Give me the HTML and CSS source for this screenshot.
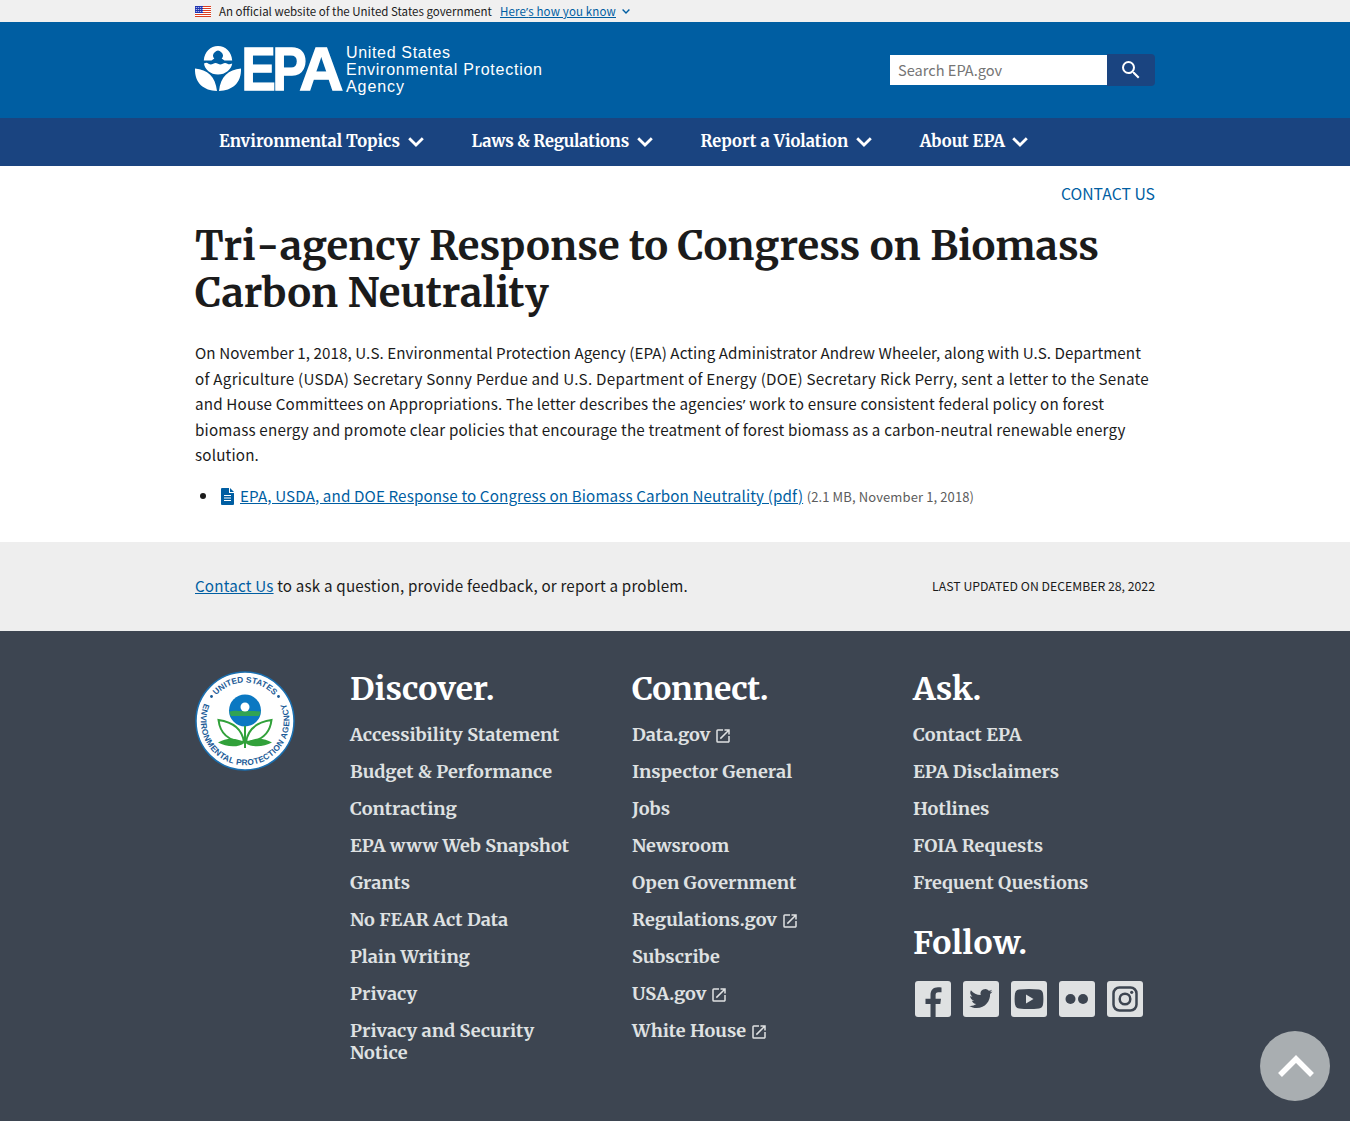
FILE: index.html
```html
<!DOCTYPE html>
<html lang="en">
<head>
<meta charset="utf-8">
<title>Tri-agency Response to Congress on Biomass Carbon Neutrality | US EPA</title>
<link rel="stylesheet" href="styles.css">
</head>
<body>
<svg class="sprite" aria-hidden="true">
  <symbol id="chev" viewBox="0 0 16 10"><path d="M1.2 1.2 8 8 14.8 1.2" fill="none" stroke="currentColor" stroke-width="2.8"/></symbol>
  <symbol id="ext" viewBox="0 0 24 24"><path fill="currentColor" d="M19 19H5V5h7V3H5a2 2 0 0 0-2 2v14a2 2 0 0 0 2 2h14c1.100 0 2-.9 2-2v-7h-2v7zM14 3v2h3.590l-9.830 9.830 1.410 1.410L19 6.410V10h2V3h-7z"/></symbol>
</svg>

<div class="banner">
  <div class="wrap banner-row">
    <svg class="flag" viewBox="0 0 16 11"><path fill="#fff" d="M0 0h16v11H0z"/><path stroke="#db3e1f" d="M0 .5h16M0 2.500h16M0 4.500h16M0 6.500h16M0 8.500h16M0 10.500h16"/><path fill="#1e33b1" d="M0 0h8v7H0z"/><path stroke="#fff" stroke-width=".8" stroke-dasharray="1 1" d="M.8 1.500h7M.8 3.500h7M.8 5.500h7"/></svg>
    <span class="official">An official website of the United States government</span>
    <a class="know" href="#">Here<span class="apos">’</span>s how you know</a>
    <svg class="know-chev"><use href="#chev"/></svg>
  </div>
</div>

<header class="header">
  <div class="wrap header-row">
    <svg class="logo" viewBox="0 0 350 52">
      <g fill="#fff">
        <path d="M8.800 16.500C9.500 7.500 15.500 2 23 2s13.500 5.500 14.200 14.500h-7.700c-.9-1-2-1.300-2.800-1.800A4.800 4.800 0 1 0 19.300 14.700c-.8.5-1.900.8-2.800 1.800z"/>
        <path d="M9 19.500c2-1 3-1 4.500.2 1.600 1 3 1 4.700 0 1.600-1 3-1 4.800 0 1.600 1 3 1 4.700 0 1.600-1 3-1 4.700 0 1.500.8 3 .6 4.800-.2C36.300 25.500 30.500 30.500 23 30.500S9.700 25.500 9 19.500z"/>
        <path d="M0 24.500c12.500 1.300 20.500 8 22 22.500C9 46.500-.5 39.500 0 24.500zM46 24.500c-12.500 1.300-20.500 8-22 22.500 13-.5 22.500-7.500 22-22.500z"/>
        <text class="logo-epa" transform="translate(46.500 45.500) scale(.84 1)" x="0 37">EP</text>
        <text class="logo-epa" x="104.200" y="45.500">A</text>
        <text class="logo-name" x="151" y="14" textLength="104">United States</text>
        <text class="logo-name" x="151" y="31" textLength="196">Environmental Protection</text>
        <text class="logo-name" x="151" y="48" textLength="58">Agency</text>
      </g>
    </svg>
    <form class="search">
      <input type="text" placeholder="Search EPA.gov" aria-label="Search">
      <button type="button" aria-label="Search"><svg viewBox="0 0 24 24"><path fill="#fff" d="M15.500 14h-.79l-.28-.27A6.470 6.470 0 0 0 16 9.500 6.500 6.500 0 1 0 9.500 16c1.610 0 3.090-.59 4.230-1.570l.27.28v.79l5 4.990L20.490 19l-4.990-5zm-6 0C7.010 14 5 11.990 5 9.500S7.010 5 9.500 5 14 7.010 14 9.500 11.990 14 9.500 14z"/></svg></button>
    </form>
  </div>
</header>

<nav class="nav">
  <div class="wrap nav-row">
    <a href="#">Environmental Topics<svg><use href="#chev"/></svg></a>
    <a class="laws" href="#">Laws &amp; Regulations<svg><use href="#chev"/></svg></a>
    <a class="report" href="#">Report a Violation<svg><use href="#chev"/></svg></a>
    <a href="#">About EPA<svg><use href="#chev"/></svg></a>
  </div>
</nav>

<main class="main">
  <div class="wrap">
    <div class="contact-top"><a href="#">CONTACT US</a></div>
    <h1>Tri<span class="hyphen">-</span>agency Response to Congress on Biomass Carbon Neutrality</h1>
    <p class="intro"><span class="lead">On November 1, 2018, U.S. Environmental Protection Agency (EPA) Acting Administrator Andrew Wheeler, along with U.S. Department </span><span class="officials">of Agriculture (USDA) Secretary Sonny Perdue and U.S. Department of Energy (DOE) Secretary Rick Perry, sent a letter to the Senate </span>and House Committees on Appropriations. The letter describes the agencies<span class="apos">’</span> work to ensure consistent federal policy on forest biomass energy and promote clear policies that encourage the treatment of forest biomass as a carbon-neutral renewable energy solution.</p>
    <ul class="files">
      <li><svg class="doc" viewBox="0 0 13 17"><path fill="#005ea2" d="M1 0h7v5h5v11a1 1 0 0 1-1 1H1a1 1 0 0 1-1-1V1a1 1 0 0 1 1-1zM9 0l4 4H9z"/><path stroke="#fff" d="M3 7.500h7M3 10h7M3 12.500h7"/></svg><a href="#">EPA, USDA, and DOE Response to Congress on Biomass Carbon Neutrality (pdf)</a> <span class="size">(2.1 MB, November 1, 2018)</span></li>
    </ul>
  </div>
</main>

<section class="feedback">
  <div class="wrap feedback-row">
    <p><a href="#">Contact Us</a> to ask a question, provide feedback, or report a problem.</p>
    <p class="updated">LAST UPDATED ON DECEMBER 28, 2022</p>
  </div>
</section>

<footer class="footer">
  <div class="wrap footer-row">
    <svg class="seal" viewBox="0 0 100 100">
      <defs><path id="arc-top" d="M11.500 50a38.500 38.500 0 0 1 77 0"/><path id="arc-bottom" d="M8.500 34.500A44.300 44.300 0 1 0 91.500 34.500"/></defs>
      <circle cx="50" cy="50" r="49" fill="#fff" stroke="#1a6fb0" stroke-width="1.500"/>
      <text class="seal-text"><textPath href="#arc-top" startOffset="50%" text-anchor="middle" textLength="65">UNITED STATES</textPath></text>
      <text class="seal-text"><textPath href="#arc-bottom" startOffset="50%" text-anchor="middle" textLength="175">ENVIRONMENTAL PROTECTION AGENCY</textPath></text>
      <circle cx="16.500" cy="25.500" r="1.400" fill="#1a5a96"/><circle cx="83.500" cy="25.500" r="1.400" fill="#1a5a96"/>
      <circle cx="50" cy="39.500" r="16" fill="#0b78c2"/>
      <path fill="#31a354" d="M34.500 40.500c5-1.500 8-.5 13-.5s11-.5 18 .5c-.3 1.800-.8 3-1.500 4.500H36c-.8-1.500-1.200-2.700-1.500-4.500z"/>
      <circle cx="50" cy="36" r="4.500" fill="#fff"/>
      <path fill="none" stroke="#31a13a" stroke-width="2" d="M50 55v22M49 71C32 70 25 62 23.500 49 38 51 47 58 49 71zM51 71c17-1 24-9 25.500-22C62 51 53 58 51 71z"/>
      <path fill="#31a13a" d="M49.500 72C41 66 31 67 23 71.500c8 4.500 20 5.500 26.500.5zM50.500 72c8.500-6 18.500-5 26.500-.5-8 4.500-20 5.500-26.500.5z"/>
    </svg>
    <div class="col discover">
      <h2>Discover.</h2>
      <ul>
        <li>Accessibility Statement</li><li>Budget &amp; Performance</li><li>Contracting</li><li>EPA www Web Snapshot</li><li>Grants</li><li>No FEAR Act Data</li><li>Plain Writing</li><li>Privacy</li><li>Privacy and Security Notice</li>
      </ul>
    </div>
    <div class="col connect">
      <h2>Connect.</h2>
      <ul>
        <li>Data.gov<svg class="ext"><use href="#ext"/></svg></li><li>Inspector General</li><li>Jobs</li><li>Newsroom</li><li>Open Government</li><li>Regulations.gov<svg class="ext"><use href="#ext"/></svg></li><li>Subscribe</li><li>USA.gov<svg class="ext"><use href="#ext"/></svg></li><li>White House<svg class="ext"><use href="#ext"/></svg></li>
      </ul>
    </div>
    <div class="col">
      <h2>Ask.</h2>
      <ul>
        <li>Contact EPA</li><li>EPA Disclaimers</li><li>Hotlines</li><li>FOIA Requests</li><li>Frequent Questions</li>
      </ul>
      <h2 class="follow">Follow.</h2>
      <div class="social">
        <svg viewBox="0 0 36 36"><rect width="36" height="36" rx="3"/><path class="ink" d="M15.500 36V23H10.500v-5.200h5V14c0-5 3-7.700 7.500-7.700 1.500 0 3 .1 3.500.2v4.800h-3c-2.400 0-2.900 1.200-2.900 2.900v3.600H26L25.300 23h-4.700v13z"/></svg>
        <svg viewBox="0 0 36 36"><rect width="36" height="36" rx="3"/><path class="ink" d="M29.500 10.600c-.9.400-1.800.6-2.700.7 1-.6 1.700-1.500 2.100-2.600-.9.500-1.900.9-3 1.100a4.730 4.730 0 0 0-8.200 4.300c-4-.2-7.400-2.100-9.800-4.900-1.300 2.200-.6 4.900 1.500 6.300-.8 0-1.500-.2-2.200-.6 0 2.300 1.600 4.300 3.800 4.700-.7.200-1.400.2-2.100.1.600 1.900 2.300 3.200 4.400 3.300A9.500 9.500 0 0 1 6.300 25c2.100 1.300 4.600 2.100 7.300 2.100 8.800 0 13.800-7.400 13.500-14.100 1-.6 1.800-1.400 2.400-2.400z"/></svg>
        <svg viewBox="0 0 36 36"><rect width="36" height="36" rx="3"/><path class="ink" d="M8 8.500Q18 7.300 28 8.500 31.500 9 32 12.500q.8 5.500 0 11-.5 3.500-4 4-10 1.200-20 0-3.500-.5-4-4-.8-5.500 0-11Q4.500 9 8 8.500z"/><path d="M15 13.500v9l7.500-4.500z"/></svg>
        <svg viewBox="0 0 36 36"><rect width="36" height="36" rx="3"/><circle class="ink" cx="11.500" cy="18" r="5"/><circle class="ink" cx="24" cy="18" r="5"/></svg>
        <svg viewBox="0 0 36 36"><rect width="36" height="36" rx="3"/><rect class="line" x="6.500" y="6.500" width="23" height="23" rx="6"/><circle class="line" cx="18" cy="18" r="5.300"/><circle class="ink" cx="24.700" cy="11.300" r="1.600"/></svg>
      </div>
    </div>
  </div>
</footer>
<a class="to-top" href="#" aria-label="Back to top"><svg viewBox="0 0 36 22"><path d="M2 20 18 4l16 16" fill="none" stroke="#fff" stroke-width="5.500"/></svg></a>
</body>
</html>
```
FILE: styles.css
```css
* { box-sizing: border-box; }
body {
  margin: 0;
  font: 15.200px/25.440px "Source Sans Pro", "Noto Sans CJK SC", sans-serif;
  color: #1b1b1b;
  background: #fff;
}
h1, h2, p, ul { margin: 0; padding: 0; }
a { color: #005ea2; }
.sprite { display: none; }
.wrap { width: 960px; margin: 0 auto; }
.apos { font-family: "Noto Sans", sans-serif; line-height: 1; }

.banner { height: 22px; background: #f0f0f0; }
.banner-row { display: flex; align-items: center; height: 22px; font-size: 11.500px; line-height: 22px; white-space: nowrap; }
.flag { width: 16px; height: 11px; margin-right: 8px; }
.official { width: 281px; }
.know { letter-spacing: .15px; }
.know-chev { width: 8px; height: 5px; margin-left: 6px; color: #005ea2; }

.header { height: 96px; background: #005ea2; }
.header-row { display: flex; justify-content: space-between; padding-top: 22px; }
.logo { width: 350px; height: 52px; overflow: visible; }
.logo-epa { font: bold 61px "Liberation Sans", sans-serif; stroke: #fff; stroke-width: 1.500px; }
.logo-name { font: 16px "Liberation Sans", sans-serif; }
.search { display: flex; height: 32px; margin-top: 10px; }
.search input { width: 217px; height: 30px; margin: 1px 0; padding: 0 8px 1px; border: 0; font: inherit; font-size: 14.600px; color: #1b1b1b; background: #fff; }
.search input::placeholder { color: #757575; }
.search button { width: 48px; height: 32px; padding: 4px 12px; border: 0; border-radius: 0 4px 4px 0; background: #1a4480; }
.search button svg { display: block; width: 24px; height: 24px; }

.nav { height: 48px; background: #1a4480; }
.nav-row { display: flex; gap: 48px; padding-left: 24px; }
.nav a { display: flex; align-items: center; height: 48px; font: bold 16.500px/48px Merriweather, "DejaVu Serif Condensed", serif; color: #fff; text-decoration: none; }
.nav .laws { letter-spacing: -.2px; }
.nav .report { letter-spacing: .05px; }
.nav svg { width: 16px; height: 10px; margin-left: 7.500px; }

.main { height: 376px; padding-top: 15px; }
.contact-top { text-align: right; }
.contact-top a { font-size: 15.750px; text-decoration: none; }
h1 { margin-top: 17px; font: bold 40px/47px Merriweather, "DejaVu Serif Condensed", serif; }
.hyphen { padding: 0 .5px; }
.intro { margin-top: 23px; letter-spacing: .17px; }
.lead { letter-spacing: .07px; }
.officials { letter-spacing: .26px; }
.files { margin-top: 15px; padding-left: 24px; letter-spacing: .12px; }
.doc { width: 13px; height: 17px; margin: 0 6px 0 2px; vertical-align: -3px; }
.size { font-size: 13px; color: #5c5c5c; }

.feedback { height: 89px; background: #eee; }
.feedback-row { display: flex; justify-content: space-between; align-items: center; height: 87px; letter-spacing: .18px; }
.updated { padding-top: 2px; font-size: 12.270px; letter-spacing: 0; }

.footer { height: 490px; background: #3d4551; color: #dfe1e2; }
.footer-row { display: flex; padding-top: 40px; }
.seal { flex: none; width: 100px; height: 100px; margin-right: 55px; }
.seal-text { font: bold 8.300px "Liberation Sans", sans-serif; fill: #1a5a96; }
.col { flex: none; width: 282px; font: bold 18.080px/22px Merriweather, "DejaVu Serif Condensed", serif; letter-spacing: .04px; }
.col.connect { width: 281px; }
.col:last-child { width: 242px; }
.col h2 { font-size: 32px; line-height: 36px; color: #fff; }
.connect h2 { letter-spacing: -.35px; }
.col ul { display: grid; gap: 15px; margin-top: 17px; list-style: none; }
.discover ul { width: 230px; }
.ext { width: 18px; height: 18px; margin-left: 4px; vertical-align: -4px; }
.col .follow { margin-top: 31px; letter-spacing: .5px; }
.social { display: flex; gap: 12px; margin: 20px 0 0 2px; fill: #dfe1e2; }
.social svg { width: 36px; height: 36px; }
.social .ink { fill: #3d4551; }
.social .line { fill: none; stroke: #3d4551; stroke-width: 2.500; }

.to-top { position: fixed; right: 20px; bottom: 20px; display: grid; place-items: center; width: 70px; height: 70px; border-radius: 50%; background: #a9aeb1; }
.to-top svg { width: 36px; height: 22px; margin-left: 2px; }
```
